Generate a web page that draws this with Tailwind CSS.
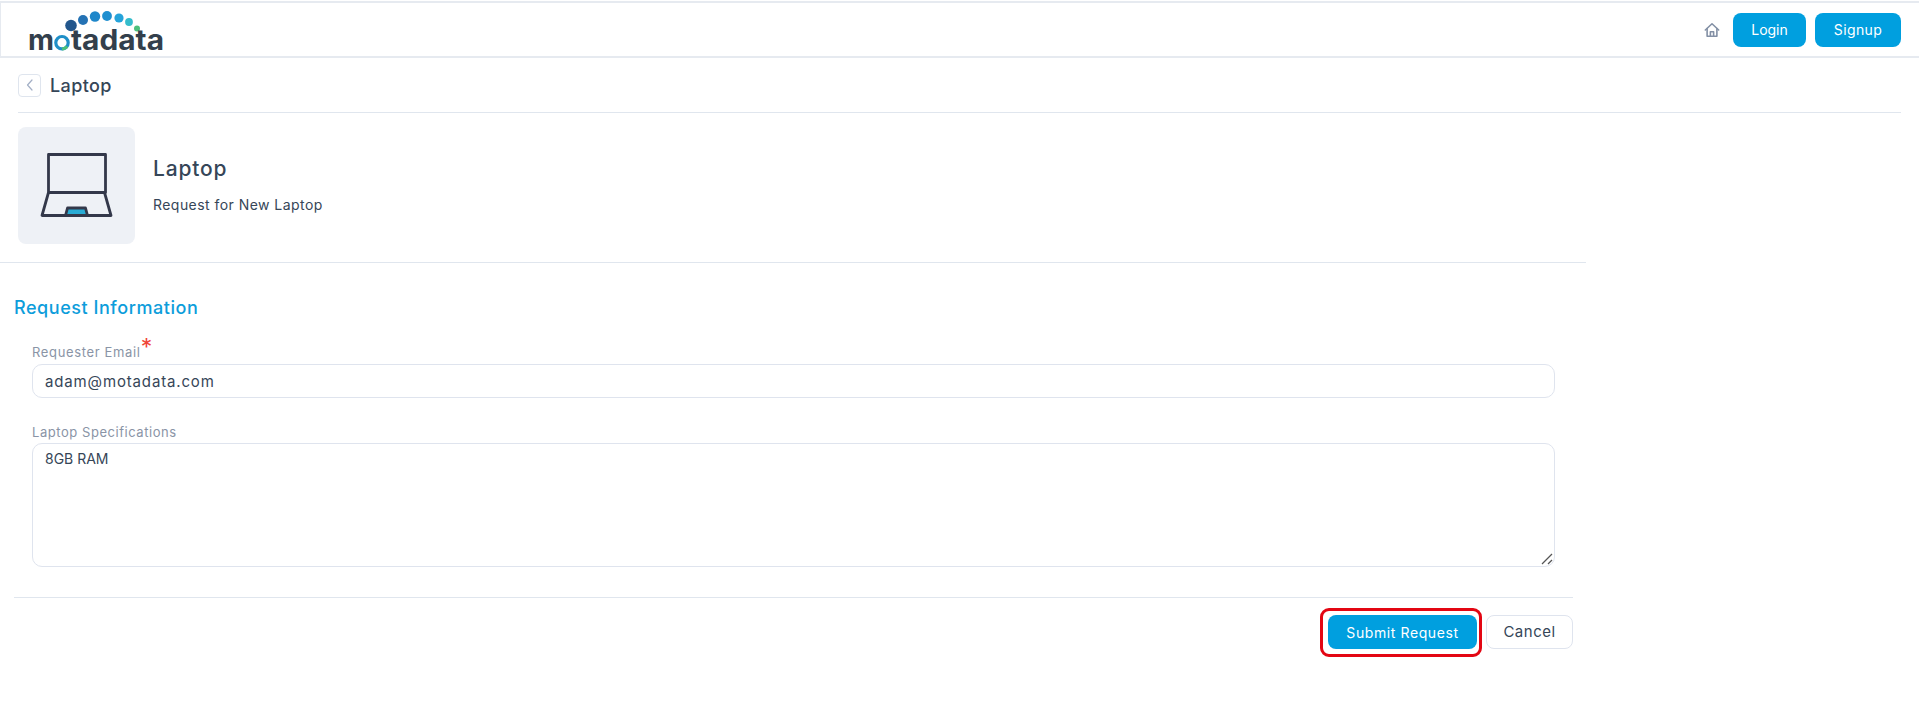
<!DOCTYPE html>
<html lang="en">
<head>
    <meta charset="UTF-8">
    <meta name="viewport" content="width=device-width, initial-scale=1.0">
    <title>Laptop</title>
    <script src="https://cdn.jsdelivr.net/npm/@tailwindcss/browser@4"></script>
</head>
<body class="bg-white font-['Inter',sans-serif] text-[#364658] h-[724px] overflow-hidden">
    <!-- header -->
    <header class="h-[57px] mt-[1px] border-t-2 border-b-2 border-l border-[#e6eaf0] flex items-center">
        <svg class="w-[170px] h-[54px] shrink-0 -ml-[1px]" viewBox="0 2 170 54">
            <circle cx="71" cy="24.500" r="5.800" fill="#22568c"/>
            <circle cx="83" cy="19" r="5" fill="#2472b4"/>
            <circle cx="95" cy="15.500" r="5.200" fill="#1f87ca"/>
            <circle cx="107" cy="15" r="4.900" fill="#1f8fd0"/>
            <circle cx="119" cy="17" r="4.600" fill="#25a3da"/>
            <circle cx="129" cy="21" r="3.900" fill="#35bccb"/>
            <circle cx="137" cy="27.500" r="3" fill="#4cc07c"/>
            <text x="28" y="49" font-size="28" font-weight="700" fill="#333f4c" textLength="26" lengthAdjust="spacingAndGlyphs">m</text>
            <circle cx="62" cy="41.700" r="6.200" fill="none" stroke="#1e8fc8" stroke-width="3.200"/>
            <path d="M62 47.900a6.200 6.200 0 0 0 5-2.500" fill="none" stroke="#4cc07c" stroke-width="3.200"/>
            <text x="71" y="49" font-size="28" font-weight="700" fill="#333f4c" textLength="93" lengthAdjust="spacingAndGlyphs">tadata</text>
        </svg>
        <div class="ml-auto flex items-center pr-[18px]">
            <svg class="w-[16px] h-[16px] mr-[13px]" viewBox="0 0 18 18" fill="none" stroke="#8390a5" stroke-width="1.800" stroke-linejoin="round" stroke-linecap="round">
                <path d="M1.500 9 9 2l7.500 7"/>
                <path d="M3.500 7.500V16h11V7.500"/>
                <path d="M7.200 16v-5h3.600v5"/>
            </svg>
            <button class="w-[73px] h-[34px] rounded-lg bg-[#009fdf] text-white text-[14px]">Login</button>
            <button class="w-[86px] h-[34px] rounded-lg bg-[#009fdf] text-white text-[14px] tracking-[0.4px] ml-[9px]">Signup</button>
        </div>
    </header>

    <!-- page title -->
    <div class="mx-[18px] h-[55px] border-b border-[#e0e6ee] flex items-center">
        <span class="w-[23px] h-[23px] rounded border border-[#dfe5ee] flex items-center justify-center">
            <svg class="w-[10px] h-[12px]" viewBox="0 0 10 12" fill="none" stroke="#a3afc6" stroke-width="1.200" stroke-linecap="round" stroke-linejoin="round"><path d="M7 1 2.500 6 7 11"/></svg>
        </span>
        <h1 class="ml-[9px] text-[18px] font-medium tracking-[0.4px]">Laptop</h1>
    </div>

    <div class="w-[1586px]">
        <!-- item summary -->
        <div class="h-[150px] border-b border-[#e0e6ee] pl-[18px] pt-[14px] flex items-start">
            <div class="w-[117px] h-[117px] rounded-lg bg-[#eef1f6] flex items-center justify-center">
                <svg class="w-[117px] h-[117px]" viewBox="18 127 117 117" fill="none" stroke="#33384a" stroke-width="2.800" stroke-linejoin="round">
                    <path d="M48.500 154.500h57v38h-57z"/>
                    <path d="M48.500 192.500 42 215.500h69l-6.500-23"/>
                    <path d="M65.500 215.500l2-7.500h18l2 7.500z" fill="#29abd4"/>
                </svg>
            </div>
            <div class="ml-[18px]">
                <h2 class="text-[21px] font-medium tracking-[0.8px] leading-[28px] mt-[28px]">Laptop</h2>
                <p class="text-[14px] tracking-[0.45px] leading-[20px] mt-[12px]">Request for New Laptop</p>
            </div>
        </div>

        <!-- form -->
        <div class="pl-[14px] pr-[13px]">
            <h3 class="text-[18px] font-medium tracking-[0.55px] text-[#0d9ddb] leading-[28px] mt-[31px]">Request Information</h3>
            <div class="pl-[18px] pr-[18px] mt-[20px]">
                <label class="block text-[13px] tracking-[0.65px] leading-[20px] text-[#8a94a6]">Requester Email<span class="text-[#f04438] text-[23px] leading-[10px] align-top">*</span></label>
                <input type="text" value="adam@motadata.com" class="block w-full h-[34px] mt-[2px] rounded-[10px] border border-[#dfe4ee] px-[12px] text-[15px] tracking-[0.85px] outline-none">
                <label class="block text-[13px] tracking-[0.55px] leading-[20px] text-[#8a94a6] mt-[24px]">Laptop Specifications</label>
                <div class="relative mt-[1px] h-[124px]">
                    <textarea class="block w-full h-full rounded-[10px] border border-[#dfe4ee] px-[12px] py-[4px] text-[14px] leading-[22px] outline-none resize-none">8GB RAM</textarea>
                    <svg class="absolute right-[2px] bottom-[2px] w-[12px] h-[12px]" viewBox="0 0 12 12" fill="none" stroke="#555" stroke-width="1.300"><path d="M1 11 11 1"/><path d="M7 11l4-4"/></svg>
                </div>
            </div>
            <div class="border-t border-[#e0e6ee] mt-[30px] pt-[17px] flex justify-end">
                <button class="relative w-[149px] h-[34px] rounded-lg bg-[#009fdf] text-white text-[14px] tracking-[0.6px]">
                    Submit Request
                    <span class="absolute -left-[8px] -right-[5px] -top-[7px] -bottom-[8px] border-[3px] border-[#e30613] rounded-[9px]"></span>
                </button>
                <button class="w-[87px] h-[34px] ml-[9px] rounded-lg border border-[#dfe4ee] text-[15px] tracking-[0.5px]">Cancel</button>
            </div>
        </div>
    </div>
</body>
</html>
